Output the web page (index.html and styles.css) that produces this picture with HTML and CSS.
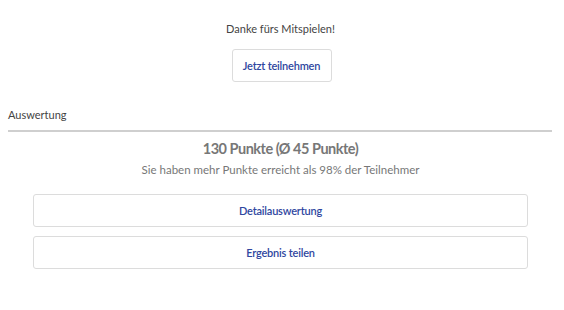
FILE: index.html
```html
<!DOCTYPE html>
<html lang="de">
<head>
<meta charset="utf-8">
<link rel="stylesheet" href="styles.css">
</head>
<body>
<div class="page">
  <div class="thanks">
    <p class="thanks-text">Danke fürs Mitspielen!</p>
    <button class="btn btn-small">Jetzt teilnehmen</button>
  </div>
  <div class="section">
    <h2 class="section-title">Auswertung</h2>
    <div class="score">
      <div class="points">130 Punkte (Ø 45 Punkte)</div>
      <div class="compare">Sie haben mehr Punkte erreicht als 98% der Teilnehmer</div>
    </div>
    <div class="actions">
      <button class="btn btn-wide">Detailauswertung</button>
      <button class="btn btn-wide">Ergebnis teilen</button>
    </div>
  </div>
</div>
</body>
</html>
```
FILE: styles.css
```css
* { box-sizing: border-box; }
html, body { margin: 0; padding: 0; background: #fff; }
body {
  font-family: "Lato", "Open Sans", sans-serif;
  color: #444;
}
.page {
  width: 543px;
  margin-left: 9px;
  padding-top: 21px;
}
.thanks {
  display: flex;
  flex-direction: column;
  align-items: center;
}
.thanks-text {
  margin: 0;
  font-size: 11px;
  line-height: 16px;
  color: #444;
}
.btn {
  background: #fff;
  border: 1px solid #dcdcdc;
  border-radius: 3px;
  color: #2f47a0;
  font-family: inherit;
  font-size: 11px;
  font-weight: 600;
  letter-spacing: -0.2px;
  white-space: nowrap;
  padding: 0;
  cursor: pointer;
}
.btn-small {
  margin-top: 12px;
  width: 100px;
  height: 33px;
  margin-left: 2px;
}
.section { margin-top: 23px; }
.section-title {
  margin: 0 0 0 -1px;
  font-size: 11px;
  font-weight: 400;
  line-height: 18px;
  color: #444;
  padding-top: 1px;
  padding-bottom: 6px;
  border-bottom: 2px solid #cfcfcf;
}
.score {
  text-align: center;
  padding-top: 7px;
}
.points {
  font-size: 14.5px;
  font-weight: 700;
  letter-spacing: -0.5px;
  line-height: 20px;
  color: #777;
}
.compare {
  font-size: 11.5px;
  line-height: 18px;
  color: #777;
  margin-top: 2px;
}
.actions {
  display: flex;
  flex-direction: column;
  gap: 9px;
  padding: 0 24px;
  margin-top: 15px;
}
.btn-wide {
  width: 100%;
  height: 33px;
}
```
